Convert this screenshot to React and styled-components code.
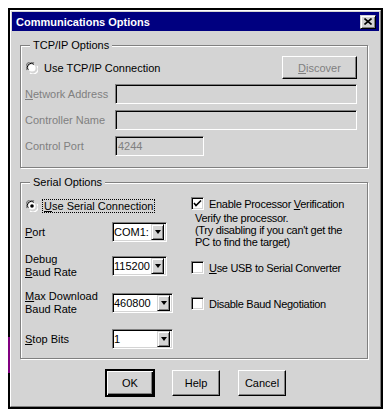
import React from 'react';
import styled, { createGlobalStyle } from 'styled-components';

const FACE = '#d4d4d4';
const SHADOW = '#808080';

const GlobalStyle = createGlobalStyle`
    html, body {
        margin: 0;
        background: #fff;
    }
    body {
        font-family: "Liberation Sans", Arial, sans-serif;
        font-size: 11px;
        color: #000;
    }
`;

const Page = styled.div`
    padding: 8px 0 0 8px;
`;

const Frame = styled.div`
    position: relative;
    box-sizing: border-box;
    width: 375px;
    height: 401px;
    border: 2px solid #000;
`;

const Glitch = styled.div`
    position: absolute;
    left: -2px;
    top: 327px;
    width: 2px;
    height: 36px;
    background: #800080;
`;

const Window = styled.div`
    box-sizing: border-box;
    height: 100%;
    padding: 1px;
    background: ${FACE};
    border: 1px solid;
    border-color: #fff ${SHADOW} ${SHADOW} #fff;
`;

const TitleBar = styled.div`
    display: flex;
    align-items: center;
    height: 19px;
    padding: 0 3px 0 4px;
    background: #000080;
    color: #fff;
    font-weight: bold;
`;

const TitleText = styled.span`
    flex: 1;
`;

const CloseButton = styled.div`
    box-sizing: border-box;
    width: 16px;
    height: 14px;
    display: flex;
    align-items: center;
    justify-content: center;
    background: ${FACE};
    border: 1px solid;
    border-color: ${FACE} #000 #000 ${FACE};
    box-shadow: inset 1px 1px 0 #fff, inset -1px -1px 0 ${SHADOW};
`;

const Body = styled.div`
    padding: 14px 11px 0 8px;
`;

const Group = styled.div`
    position: relative;
    border: 1px solid ${SHADOW};
    box-shadow: 1px 1px 0 #fff, inset 1px 1px 0 #fff;
    margin-top: ${p => p.$top || 0}px;
    padding: ${p => p.$pad};
`;

const Legend = styled.span`
    position: absolute;
    top: -7px;
    left: 9px;
    padding: 0 3px;
    line-height: 13px;
    background: ${FACE};
`;

const Row = styled.div`
    display: flex;
    align-items: center;
    height: ${p => p.$h || 20}px;
    margin-top: ${p => p.$top || 0}px;
`;

const FieldLabel = styled.div`
    width: ${p => p.$w}px;
    flex: none;
    line-height: 13px;
    color: ${p => (p.$disabled ? SHADOW : '#000')};
`;

const U = styled.span`
    text-decoration: underline;
`;

const TextBox = styled.div`
    box-sizing: border-box;
    width: ${p => p.$w}px;
    height: 20px;
    padding: 3px 2px 0;
    color: ${SHADOW};
    border: 1px solid;
    border-color: ${SHADOW} #fff #fff ${SHADOW};
    box-shadow: inset 1px 1px 0 #000, inset -1px -1px 0 ${FACE};
`;

const Button = styled.div`
    box-sizing: border-box;
    width: ${p => p.$w}px;
    height: ${p => p.$h}px;
    display: flex;
    align-items: center;
    justify-content: center;
    color: ${p => (p.$disabled ? SHADOW : '#000')};
    border: 1px solid;
    border-color: #fff #000 #000 #fff;
    box-shadow: inset -1px -1px 0 ${SHADOW};
    outline: ${p => (p.$default ? '1px solid #000' : 'none')};
    outline-offset: 0;
    ${p => p.$default && `
        border-color: #000;
        box-shadow: inset 1px 1px 0 #fff, inset -1px -1px 0 #000, inset -2px -2px 0 ${SHADOW};
    `}
`;

const DiscoverButton = styled(Button)`
    margin-left: auto;
`;

const RadioLabel = styled.span`
    margin-left: 5px;
    padding: 0 1px;
    line-height: 12px;
    outline: ${p => (p.$focus ? '1px dotted #000' : 'none')};
`;

const Columns = styled.div`
    display: flex;
`;

const LeftCol = styled.div`
    width: 166px;
    flex: none;
    padding-top: 16px;
`;

const RightCol = styled.div`
    padding-top: 14px;
    letter-spacing: -0.3px;
`;

const CheckRow = styled.div`
    display: flex;
    align-items: center;
    height: 13px;
    margin-top: ${p => p.$top || 0}px;
    gap: 5px;
`;

const CheckBox = styled.div`
    box-sizing: border-box;
    width: 13px;
    height: 13px;
    flex: none;
    display: flex;
    align-items: center;
    justify-content: center;
    background: #fff;
    border: 1px solid;
    border-color: ${SHADOW} #fff #fff ${SHADOW};
    box-shadow: inset 1px 1px 0 #000, inset -1px -1px 0 ${FACE};
`;

const HelpText = styled.div`
    margin: 2px 0 0 4px;
    line-height: 12px;
`;

const Combo = styled.div`
    box-sizing: border-box;
    width: ${p => p.$w}px;
    height: 20px;
    display: flex;
    align-items: center;
    padding: 2px 2px 2px 1px;
    background: #fff;
    border: 1px solid;
    border-color: ${SHADOW} #fff #fff ${SHADOW};
    box-shadow: inset 1px 1px 0 #000, inset -1px -1px 0 ${FACE};
`;

const ComboValue = styled.span`
    flex: 1;
    white-space: nowrap;
`;

const ArrowButton = styled.div`
    box-sizing: border-box;
    width: 13px;
    height: 16px;
    flex: none;
    display: flex;
    align-items: center;
    justify-content: center;
    background: ${FACE};
    border: 1px solid;
    border-color: ${FACE} #000 #000 ${FACE};
    box-shadow: inset 1px 1px 0 #fff, inset -1px -1px 0 ${SHADOW};
`;

const Arrow = styled.div`
    width: 0;
    height: 0;
    border-left: 3.5px solid transparent;
    border-right: 3.5px solid transparent;
    border-top: 4px solid #000;
`;

const ButtonBar = styled.div`
    display: flex;
    justify-content: center;
    gap: 18px;
    margin-top: 11px;
    padding-left: 4px;
`;

const Radio = ({ checked }) => (
    <svg width="12" height="12" viewBox="0 0 12 12" style={{ flex: 'none' }}>
        <path d="M1 8 A5 5 0 0 1 8 1" stroke={SHADOW} fill="none" strokeWidth="1.2" />
        <path d="M2.5 8 A3.8 3.8 0 0 1 8 2.5" stroke="#000" fill="none" strokeWidth="1" />
        <path d="M4 11 A5 5 0 0 0 11 4" stroke="#fff" fill="none" strokeWidth="1.2" />
        <circle cx="6" cy="6" r="3.6" fill="#fff" />
        {checked && <circle cx="6" cy="6" r="1.8" fill="#000" />}
    </svg>
);

const Check = () => (
    <svg width="9" height="9" viewBox="0 0 9 9">
        <path d="M1 4 L3 6.5 L8 1.5" stroke="#000" strokeWidth="1.6" fill="none" />
    </svg>
);

const Dropdown = ({ value, width }) => (
    <Combo $w={width}>
        <ComboValue>{value}</ComboValue>
        <ArrowButton><Arrow /></ArrowButton>
    </Combo>
);

export default function App() {
    return (
        <Page>
            <GlobalStyle />
            <Frame>
                <Glitch />
                <Window>
                    <TitleBar>
                        <TitleText>Communications Options</TitleText>
                        <CloseButton>
                            <svg width="8" height="7" viewBox="0 0 8 7">
                                <path d="M0.5 0.5 L7.5 6.5 M7.5 0.5 L0.5 6.5" stroke="#000" strokeWidth="1.6" />
                            </svg>
                        </CloseButton>
                    </TitleBar>
                    <Body>
                        <Group $pad="10px 10px 11px 4px">
                            <Legend>TCP/IP Options</Legend>
                            <Row $h={23}>
                                <span style={{ width: 1 }} />
                                <Radio />
                                <RadioLabel>Use TCP/IP Connection</RadioLabel>
                                <DiscoverButton $w={75} $h={23} $disabled><span><U>D</U>iscover</span></DiscoverButton>
                            </Row>
                            <Row $top={5}>
                                <FieldLabel $w={90} $disabled><U>N</U>etwork Address</FieldLabel>
                                <TextBox $w={243} />
                            </Row>
                            <Row $top={6}>
                                <FieldLabel $w={90} $disabled>Controller Name</FieldLabel>
                                <TextBox $w={243} />
                            </Row>
                            <Row $top={6}>
                                <FieldLabel $w={90} $disabled>Control Port</FieldLabel>
                                <TextBox $w={89}>4244</TextBox>
                            </Row>
                        </Group>

                        <Group $top={14} $pad="0 0 9px 4px">
                            <Legend>Serial Options</Legend>
                            <Columns>
                                <LeftCol>
                                    <Row $h={13}>
                                        <span style={{ width: 1 }} />
                                        <Radio checked />
                                        <RadioLabel $focus><U>U</U>se Serial Connection</RadioLabel>
                                    </Row>
                                    <Row $top={10}>
                                        <FieldLabel $w={87}><U>P</U>ort</FieldLabel>
                                        <Dropdown value="COM1:" width={55} />
                                    </Row>
                                    <Row $top={14}>
                                        <FieldLabel $w={87}>Debug<br /><U>B</U>aud Rate</FieldLabel>
                                        <Dropdown value="115200" width={55} />
                                    </Row>
                                    <Row $top={17}>
                                        <FieldLabel $w={87}><U>M</U>ax Download<br />Baud Rate</FieldLabel>
                                        <Dropdown value="460800" width={61} />
                                    </Row>
                                    <Row $top={16}>
                                        <FieldLabel $w={87}><U>S</U>top Bits</FieldLabel>
                                        <Dropdown value="1" width={61} />
                                    </Row>
                                </LeftCol>
                                <RightCol>
                                    <CheckRow>
                                        <CheckBox><Check /></CheckBox>
                                        <span>Enable Processor <U>V</U>erification</span>
                                    </CheckRow>
                                    <HelpText>
                                        Verify the processor.<br />
                                        (Try disabling if you can't get the<br />
                                        PC to find the target)
                                    </HelpText>
                                    <CheckRow $top={13}>
                                        <CheckBox />
                                        <span><U>U</U>se USB to Serial Converter</span>
                                    </CheckRow>
                                    <CheckRow $top={23}>
                                        <CheckBox />
                                        <span>Disable Baud Negotiation</span>
                                    </CheckRow>
                                </RightCol>
                            </Columns>
                        </Group>

                        <ButtonBar>
                            <Button $w={48} $h={26} $default>OK</Button>
                            <Button $w={48} $h={26}>Help</Button>
                            <Button $w={48} $h={26}>Cancel</Button>
                        </ButtonBar>
                    </Body>
                </Window>
            </Frame>
        </Page>
    );
}
